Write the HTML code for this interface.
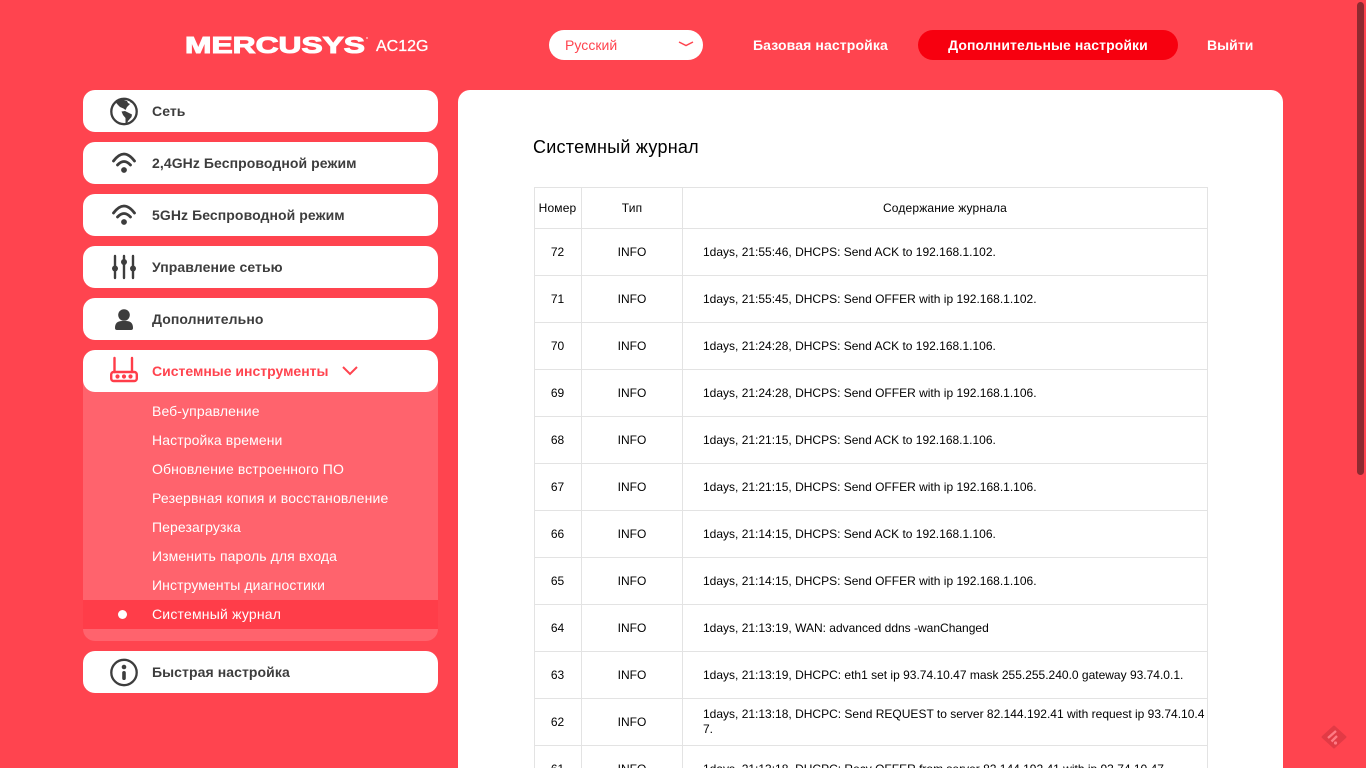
<!DOCTYPE html>
<html lang="ru"><head><meta charset="utf-8"><title>MERCUSYS AC12G</title>
<style>
html,body{margin:0;padding:0;width:1366px;height:768px;overflow:hidden;background:#ff444f;font-family:"Liberation Sans",Arial,sans-serif}
#w{position:relative;width:1366px;height:768px;overflow:hidden;background:#ff444f}
.a{position:absolute}
.pill{position:absolute;left:83px;width:355px;height:42px;background:#fff;border-radius:12px;box-sizing:border-box;padding-left:69px;line-height:42px;font-size:14px;font-weight:bold;color:#3d3d3d;white-space:nowrap;letter-spacing:.08px}
.pill svg{position:absolute}
.sub{position:absolute;left:83px;top:380px;width:355px;height:261px;background:#ff636d;border-radius:0 0 12px 12px}
.si{position:absolute;left:152px;font-size:14px;color:#fff;line-height:20px;white-space:nowrap;letter-spacing:.2px}
.panel{position:absolute;left:458px;top:90px;width:825px;height:678px;background:#fff;border-radius:12px 12px 0 0}
table{position:absolute;left:534px;top:187px;width:674px;border-collapse:collapse;table-layout:fixed;font-size:12px;color:#000}
td,th{border:1px solid #e3e3e3;text-align:center;font-weight:normal;padding:0;height:46px;box-sizing:border-box}
tr{height:47px}
tr.h{height:41px}
tr.h td{height:41px;letter-spacing:.16px}
td:first-child{padding-right:1px}
td.l{text-align:left;padding:0 2px 0 20px;line-height:15px;word-break:break-all}
</style></head><body><div id="w">
<svg class="a" style="left:184px;top:34px" width="190" height="24"><text x="1" y="19" font-family="Liberation Sans" font-weight="bold" font-size="23" fill="#fff" stroke="#fff" stroke-width="1" textLength="180" lengthAdjust="spacingAndGlyphs">MERCUSYS</text><circle cx="183" cy="4" r="1" fill="#ffb8bd"/></svg>
<div class="a" style="left:376px;top:37px;font-size:16px;line-height:20px;color:#fff;-webkit-text-stroke:.3px #fff">AC12G</div>
<div class="a" style="left:549px;top:30px;width:154px;height:30px;background:#fff;border-radius:15px"></div>
<div class="a" style="left:565px;top:35px;font-size:14px;line-height:20px;color:#ff444f;letter-spacing:.05px">Русский</div>
<svg class="a" style="left:678px;top:40px" width="16" height="8"><path d="M1 2L8 5.500L15 2" fill="none" stroke="#ff444f" stroke-width="1.500"/></svg>
<div class="a" style="left:753px;top:35px;font-size:14px;line-height:20px;font-weight:bold;color:#fff;white-space:nowrap;letter-spacing:.12px">Базовая настройка</div>
<div class="a" style="left:918px;top:30px;width:260px;height:30px;background:#f7000f;border-radius:15px;text-align:center;font-size:14px;line-height:30px;font-weight:bold;color:#fff;letter-spacing:.08px">Дополнительные настройки</div>
<div class="a" style="left:1207px;top:35px;font-size:14px;line-height:20px;font-weight:bold;color:#fff;letter-spacing:.05px">Выйти</div>

<div class="sub"></div>
<div class="a" style="left:83px;top:600px;width:355px;height:29px;background:#ff3d49"></div>
<div class="si" style="top:401px;letter-spacing:.1px">Веб-управление</div>
<div class="si" style="top:430px;letter-spacing:.1px">Настройка времени</div>
<div class="si" style="top:459px;letter-spacing:.1px">Обновление встроенного ПО</div>
<div class="si" style="top:488px">Резервная копия и восстановление</div>
<div class="si" style="top:517px;letter-spacing:.1px">Перезагрузка</div>
<div class="si" style="top:546px;letter-spacing:.1px">Изменить пароль для входа</div>
<div class="si" style="top:575px;letter-spacing:.1px">Инструменты диагностики</div>
<div class="si" style="top:604px">Системный журнал</div>
<div class="a" style="left:118px;top:610px;width:9px;height:9px;border-radius:50%;background:#fff"></div>

<div class="pill" style="top:90px">Сеть
<svg style="left:27px;top:7px" width="28" height="29" viewBox="0 0 28 29"><circle cx="14" cy="14.500" r="12.700" fill="none" stroke="#3d3d3d" stroke-width="2.300"/><path d="M5 4.500L9 2L13 1.500L14 3L17 4L18 6L20 7L17 10L15.500 13L13.500 11.500L10 10L8 8ZM11.500 14.500L15 14L19 16L22 17.500L21.500 20L18 24L17 26.500L15.500 26L15.500 21L13 18ZM19 2.500L22 4L23 6L20.500 5.500Z" fill="#3d3d3d"/></svg></div>
<div class="pill" style="top:142px">2,4GHz Беспроводной режим
<svg style="left:28px;top:9px" width="26" height="24" viewBox="0 0 26 24"><path d="M2.500 10Q13 -4 23.500 10M6.500 14Q13 7 19.500 14" fill="none" stroke="#3d3d3d" stroke-width="2.800" stroke-linecap="round"/><circle cx="13" cy="19" r="2.900" fill="#3d3d3d"/></svg></div>
<div class="pill" style="top:194px">5GHz Беспроводной режим
<svg style="left:28px;top:9px" width="26" height="24" viewBox="0 0 26 24"><path d="M2.500 10Q13 -4 23.500 10M6.500 14Q13 7 19.500 14" fill="none" stroke="#3d3d3d" stroke-width="2.800" stroke-linecap="round"/><circle cx="13" cy="19" r="2.900" fill="#3d3d3d"/></svg></div>
<div class="pill" style="top:246px">Управление сетью
<svg style="left:28px;top:8px" width="26" height="26" viewBox="0 0 26 26"><path d="M4 2V24M13 2V24M22 2V24" stroke="#3d3d3d" stroke-width="2.400" stroke-linecap="round"/><rect x="1" y="11.500" width="6" height="6" rx="3" fill="#3d3d3d"/><rect x="10" y="5" width="6" height="6" rx="3" fill="#3d3d3d"/><rect x="19" y="11.500" width="6" height="6" rx="3" fill="#3d3d3d"/></svg></div>
<div class="pill" style="top:298px">Дополнительно
<svg style="left:31px;top:9px" width="20" height="24" viewBox="0 0 20 24"><circle cx="10" cy="8" r="5.800" fill="#3d3d3d"/><path d="M1 21Q1 14 8 14H12Q19 14 19 21Q19 23 17 23H3Q1 23 1 21Z" fill="#3d3d3d"/></svg></div>
<div class="pill" style="top:350px;color:#ff444f;letter-spacing:0">Системные инструменты
<svg style="left:27px;top:6px" width="28" height="28" viewBox="0 0 28 28"><path d="M4.500 2V16M22 2V16" stroke="#ff3d49" stroke-width="2.400" stroke-linecap="round"/><rect x="1.200" y="16" width="25.600" height="9" rx="2.500" fill="none" stroke="#ff3d49" stroke-width="2.400"/><circle cx="7.500" cy="20.500" r="2.100" fill="#ff3d49"/><circle cx="14" cy="20.500" r="2.100" fill="#ff3d49"/><circle cx="20.500" cy="20.500" r="2.100" fill="#ff3d49"/></svg>
<svg style="left:259px;top:16px" width="16" height="10" viewBox="0 0 16 10"><path d="M1 1L8 8L15 1" fill="none" stroke="#ff444f" stroke-width="2"/></svg></div>
<div class="pill" style="top:651px">Быстрая настройка
<svg style="left:27px;top:7px" width="28" height="29" viewBox="0 0 28 29"><circle cx="14" cy="14.500" r="12.700" fill="none" stroke="#3d3d3d" stroke-width="2.300"/><circle cx="14" cy="9" r="2.300" fill="#3d3d3d"/><rect x="12.200" y="13" width="3.600" height="9" rx="1.800" fill="#3d3d3d"/></svg></div>

<div class="panel"></div>
<div class="a" style="left:533px;top:136px;font-size:18px;line-height:22px;color:#000;letter-spacing:.25px">Системный журнал</div>
<table>
<colgroup><col style="width:47px"><col style="width:101px"><col></colgroup>
<tr class="h"><td>Номер</td><td>Тип</td><td>Содержание журнала</td></tr>
<tr><td>72</td><td>INFO</td><td class="l">1days, 21:55:46, DHCPS: Send ACK to 192.168.1.102.</td></tr>
<tr><td>71</td><td>INFO</td><td class="l">1days, 21:55:45, DHCPS: Send OFFER with ip 192.168.1.102.</td></tr>
<tr><td>70</td><td>INFO</td><td class="l">1days, 21:24:28, DHCPS: Send ACK to 192.168.1.106.</td></tr>
<tr><td>69</td><td>INFO</td><td class="l">1days, 21:24:28, DHCPS: Send OFFER with ip 192.168.1.106.</td></tr>
<tr><td>68</td><td>INFO</td><td class="l">1days, 21:21:15, DHCPS: Send ACK to 192.168.1.106.</td></tr>
<tr><td>67</td><td>INFO</td><td class="l">1days, 21:21:15, DHCPS: Send OFFER with ip 192.168.1.106.</td></tr>
<tr><td>66</td><td>INFO</td><td class="l">1days, 21:14:15, DHCPS: Send ACK to 192.168.1.106.</td></tr>
<tr><td>65</td><td>INFO</td><td class="l">1days, 21:14:15, DHCPS: Send OFFER with ip 192.168.1.106.</td></tr>
<tr><td>64</td><td>INFO</td><td class="l">1days, 21:13:19, WAN: advanced ddns -wanChanged</td></tr>
<tr><td>63</td><td>INFO</td><td class="l">1days, 21:13:19, DHCPC: eth1 set ip 93.74.10.47 mask 255.255.240.0 gateway 93.74.0.1.</td></tr>
<tr><td>62</td><td>INFO</td><td class="l">1days, 21:13:18, DHCPC: Send REQUEST to server 82.144.192.41 with request ip 93.74.10.47.</td></tr>
<tr><td>61</td><td>INFO</td><td class="l">1days, 21:13:18, DHCPC: Recv OFFER from server 82.144.192.41 with ip 93.74.10.47.</td></tr>
</table>
<div class="a" style="left:1357px;top:2px;width:7px;height:473px;border-radius:4px;background:#8e2a30"></div>
<svg class="a" style="left:1321px;top:725px" width="26" height="24" viewBox="0 0 26 24"><path d="M13 1.500L24.500 12L13 22.500L1.500 12Z" fill="#e23a45" stroke="#e23a45" stroke-width="2" stroke-linejoin="round"/><path d="M15 6L7 13M16 11L10.500 16.500" stroke="#ff7a84" stroke-width="2.400"/><circle cx="14.500" cy="18" r="1.600" fill="#ff7a84"/></svg>
</div></body></html>
